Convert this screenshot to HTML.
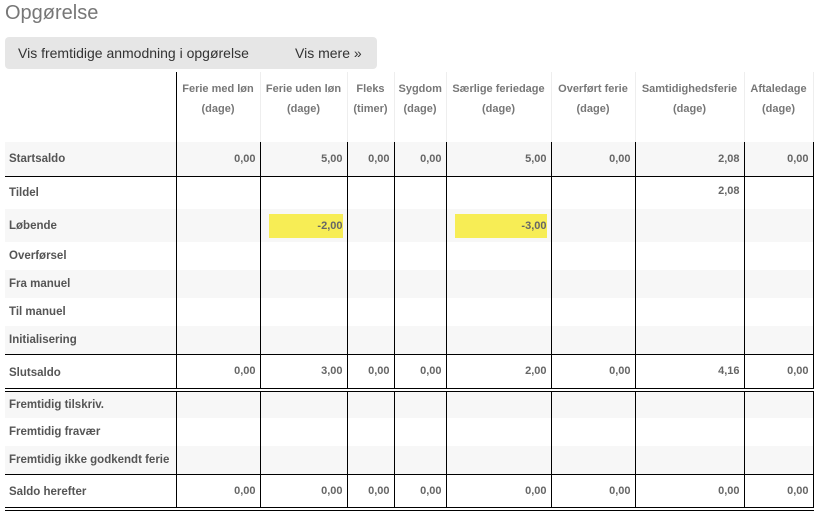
<!DOCTYPE html>
<html><head><meta charset="utf-8"><style>
body{margin:0;background:#fff;font-family:"Liberation Sans","DejaVu Sans",sans-serif;width:828px;height:519px;overflow:hidden;position:relative}
h1{position:absolute;left:5px;top:2px;margin:0;font-weight:normal;font-size:20px;color:#777}
.btn{position:absolute;left:5px;top:37px;width:372px;height:32px;background:#e6e6e6;border-radius:4px;font-size:14px;color:#333;line-height:32px}
.btn span{position:absolute}
table{position:absolute;left:5px;top:72px;border-collapse:collapse;table-layout:fixed;width:808px;font-size:11px;font-weight:bold;color:#666}
td,th{padding:0 4px;overflow:hidden;white-space:nowrap}
th{vertical-align:top;padding-top:7px;line-height:20px;height:63px;color:#777;border-left:1px solid #eee;font-size:11px}
th:first-child{border-left:none}
th.d{border-left:1px solid #000}
td{text-align:right;border-left:1px solid #000;border-right:1px solid #000;vertical-align:middle}
td:first-child{text-align:left;border-left:none;color:#555;font-size:11.5px}
tr.g td{background:#f7f7f7}
tr.b td{border-bottom:1px solid #000}
tr.dd td{border-bottom:4px double #000}
.y{display:block;background:#f7ed55;height:24px;line-height:24px;margin-left:4px;color:#666}
</style></head><body>
<h1>Opgørelse</h1>
<div class="btn"><span style="left:13px">Vis fremtidige anmodning i opgørelse</span><span style="left:290px">Vis mere »</span></div>
<table>
<colgroup><col style="width:171px"><col style="width:84px"><col style="width:87px"><col style="width:47px"><col style="width:52px"><col style="width:105px"><col style="width:84px"><col style="width:109px"><col style="width:69px"></colgroup>
<tr><th></th><th class="d">Ferie med løn<br>(dage)</th><th>Ferie uden løn<br>(dage)</th><th>Fleks<br>(timer)</th><th>Sygdom<br>(dage)</th><th>Særlige feriedage<br>(dage)</th><th>Overført ferie<br>(dage)</th><th>Samtidighedsferie<br>(dage)</th><th style="border-right:1px solid #eee">Aftaledage<br>(dage)</th></tr>
<tr class="g b" style="height:34px"><td>Startsaldo</td><td>0,00</td><td>5,00</td><td>0,00</td><td>0,00</td><td>5,00</td><td>0,00</td><td>2,08</td><td>0,00</td></tr>
<tr style="height:33px"><td>Tildel</td><td></td><td></td><td></td><td></td><td></td><td></td><td style="vertical-align:top;padding-top:8px">2,08</td><td></td></tr>
<tr class="g" style="height:33px"><td>Løbende</td><td></td><td style="padding-left:4px"><span class="y">-2,00</span></td><td></td><td></td><td><span class="y">-3,00</span></td><td></td><td></td><td></td></tr>
<tr style="height:28px"><td>Overførsel</td><td></td><td></td><td></td><td></td><td></td><td></td><td></td><td></td></tr>
<tr class="g" style="height:28px"><td>Fra manuel</td><td></td><td></td><td></td><td></td><td></td><td></td><td></td><td></td></tr>
<tr style="height:28px"><td>Til manuel</td><td></td><td></td><td></td><td></td><td></td><td></td><td></td><td></td></tr>
<tr class="g b" style="height:28px"><td>Initialisering</td><td></td><td></td><td></td><td></td><td></td><td></td><td></td><td></td></tr>
<tr class="dd" style="height:36px"><td style="padding-top:3px">Slutsaldo</td><td>0,00</td><td>3,00</td><td>0,00</td><td>0,00</td><td>2,00</td><td>0,00</td><td>4,16</td><td>0,00</td></tr>
<tr class="g" style="height:28px"><td>Fremtidig tilskriv.</td><td></td><td></td><td></td><td></td><td></td><td></td><td></td><td></td></tr>
<tr style="height:28px"><td>Fremtidig fravær</td><td></td><td></td><td></td><td></td><td></td><td></td><td></td><td></td></tr>
<tr class="g b" style="height:28px"><td>Fremtidig ikke godkendt ferie</td><td></td><td></td><td></td><td></td><td></td><td></td><td></td><td></td></tr>
<tr class="dd" style="height:35px"><td style="padding-top:3px">Saldo herefter</td><td>0,00</td><td>0,00</td><td>0,00</td><td>0,00</td><td>0,00</td><td>0,00</td><td>0,00</td><td>0,00</td></tr>
</table>
</body></html>
